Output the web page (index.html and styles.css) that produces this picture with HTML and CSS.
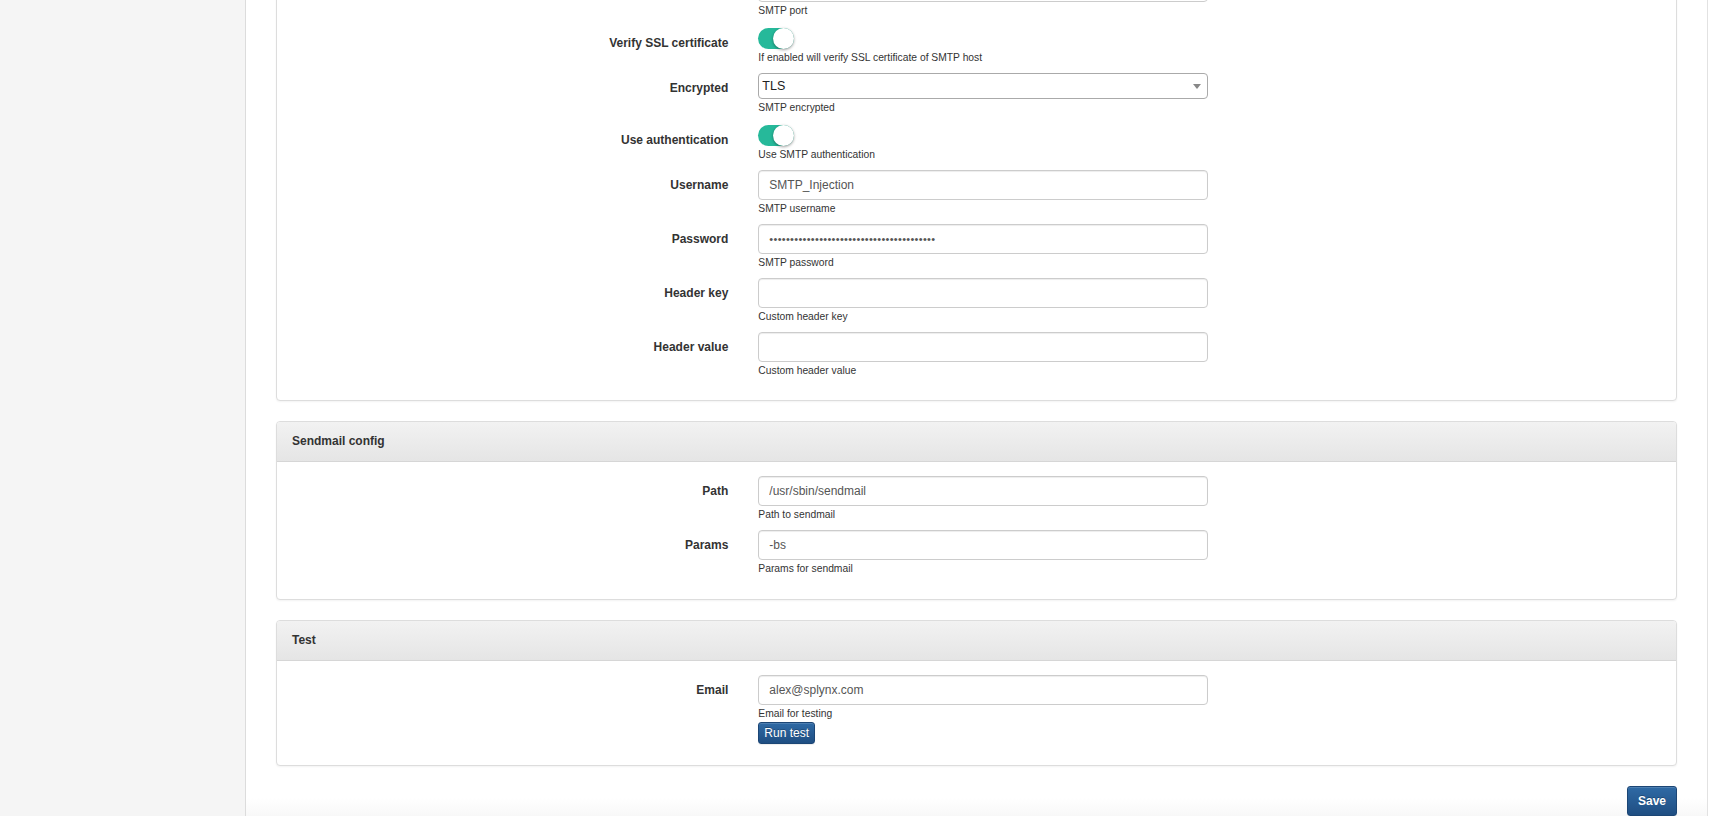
FILE: index.html
```html
<!DOCTYPE html>
<html lang="en">
<head>
<meta charset="utf-8">
<title>Email config</title>
<link rel="stylesheet" href="styles.css">
</head>
<body>
<div class="layout">
  <aside class="sidebar"></aside>
  <main class="content">
    <form class="form-horizontal">
      <section class="panel panel-scrolled">
        <div class="panel-body">
          <div class="form-group">
            <span class="control-label"></span>
            <div class="field">
              <input class="form-control" id="port" type="text" value="" aria-label="Port">
              <div class="help-block">SMTP port</div>
            </div>
          </div>
          <div class="form-group form-group-switch">
            <label class="control-label">Verify SSL certificate</label>
            <div class="field">
              <div class="switch-wrap"><span class="switch is-on"><span class="knob"></span></span></div>
              <div class="help-block">If enabled will verify SSL certificate of SMTP host</div>
            </div>
          </div>
          <div class="form-group">
            <label class="control-label" for="enc">Encrypted</label>
            <div class="field">
              <div class="select-wrap">
                <select class="select" id="enc"><option>TLS</option><option>SSL</option><option>None</option></select>
              </div>
              <div class="help-block">SMTP encrypted</div>
            </div>
          </div>
          <div class="form-group form-group-switch">
            <label class="control-label">Use authentication</label>
            <div class="field">
              <div class="switch-wrap"><span class="switch is-on"><span class="knob"></span></span></div>
              <div class="help-block">Use SMTP authentication</div>
            </div>
          </div>
          <div class="form-group">
            <label class="control-label" for="user">Username</label>
            <div class="field">
              <input class="form-control" id="user" type="text" value="SMTP_Injection">
              <div class="help-block">SMTP username</div>
            </div>
          </div>
          <div class="form-group">
            <label class="control-label" for="pass">Password</label>
            <div class="field">
              <input class="form-control" id="pass" type="password" value="0123456789012345678901234567890123456789">
              <div class="help-block">SMTP password</div>
            </div>
          </div>
          <div class="form-group">
            <label class="control-label" for="hkey">Header key</label>
            <div class="field">
              <input class="form-control" id="hkey" type="text" value="">
              <div class="help-block">Custom header key</div>
            </div>
          </div>
          <div class="form-group form-group-end">
            <label class="control-label" for="hval">Header value</label>
            <div class="field">
              <input class="form-control" id="hval" type="text" value="">
              <div class="help-block">Custom header value</div>
            </div>
          </div>
        </div>
      </section>

      <section class="panel">
        <div class="panel-heading">Sendmail config</div>
        <div class="panel-body">
          <div class="form-group">
            <label class="control-label" for="path">Path</label>
            <div class="field">
              <input class="form-control" id="path" type="text" value="/usr/sbin/sendmail">
              <div class="help-block">Path to sendmail</div>
            </div>
          </div>
          <div class="form-group">
            <label class="control-label" for="params">Params</label>
            <div class="field">
              <input class="form-control" id="params" type="text" value="-bs">
              <div class="help-block">Params for sendmail</div>
            </div>
          </div>
        </div>
      </section>

      <section class="panel">
        <div class="panel-heading">Test</div>
        <div class="panel-body">
          <div class="form-group form-group-last">
            <label class="control-label" for="email">Email</label>
            <div class="field">
              <input class="form-control" id="email" type="text" value="alex@splynx.com">
              <div class="help-block">Email for testing</div>
              <button type="button" class="btn btn-primary btn-xs">Run test</button>
            </div>
          </div>
        </div>
      </section>

      <div class="form-actions">
        <button type="submit" class="btn btn-primary btn-sm btn-save">Save</button>
      </div>
    </form>
  </main>
</div>
</body>
</html>
```

FILE: styles.css
```css
* { box-sizing: border-box; }

html, body {
  margin: 0;
  padding: 0;
  height: 100%;
  overflow: hidden;
}

body {
  font-family: "Liberation Sans", Arial, Helvetica, sans-serif;
  font-size: 12px;
  line-height: 1.42857;
  color: #333;
  background: #fff;
}

.layout {
  display: flex;
  min-height: 100vh;
  margin-right: 2px;
}

.sidebar {
  flex: 0 0 246px;
  background: #f5f5f5;
  border-right: 1px solid #dcdcdc;
}

.content {
  flex: 1 1 auto;
  padding: 0 30px;
  border-right: 1px solid #e2e2e2;
  background: linear-gradient(to bottom, #fff 0, #fff calc(100% - 18px), #f8f8f8 100%);
}

.panel-scrolled {
  margin-top: -44px;
}

.panel {
  background: #fff;
  border: 1px solid #ddd;
  border-radius: 4px;
  box-shadow: 0 1px 2px rgba(0, 0, 0, .05);
  margin-bottom: 20px;
}

.panel-heading {
  padding: 11px 15px;
  line-height: 17px;
  font-weight: bold;
  color: #333;
  background: linear-gradient(to bottom, #f2f2f2 0, #e5e5e5 100%);
  border-bottom: 1px solid #d6d6d6;
  border-radius: 3px 3px 0 0;
}

.panel-body {
  padding: 14px 15px 15px;
}

.panel-scrolled .panel-body {
  padding-top: 15px;
}

.form-group {
  display: grid;
  grid-template-columns: 33.333% 480px;
  margin: 0 -15px 9px;
}

.form-group-end {
  margin-bottom: 8px;
}

.form-group-last {
  margin-bottom: 6px;
}

.control-label {
  padding: 7px 15px 0;
  text-align: right;
  font-weight: bold;
  line-height: 17px;
  color: #333;
}

.form-group-switch .control-label {
  padding-top: 9px;
}

.field {
  padding: 0 15px;
}

.form-control {
  display: block;
  width: 100%;
  height: 30px;
  padding: 5px 10px;
  font-family: inherit;
  font-size: 12px;
  line-height: 18px;
  color: #555;
  background: #fff;
  border: 1px solid #ccc;
  border-radius: 4px;
  box-shadow: inset 0 1px 1px rgba(0, 0, 0, .075);
  outline: none;
}

input[type="password"].form-control {
  font-size: 11px;
  letter-spacing: 0.3px;
}

.help-block {
  margin-top: 2px;
  font-size: 10.3px;
  line-height: 13px;
  color: #333;
}

.switch-wrap {
  height: 23px;
  padding-top: 2px;
}

.switch {
  display: flex;
  justify-content: flex-end;
  width: 36px;
  height: 21px;
  border-radius: 11px;
  background: #dfdfdf;
}

.switch.is-on {
  background: #26b99a;
}

.knob {
  width: 21px;
  height: 21px;
  border-radius: 50%;
  background: #fff;
  box-shadow: 0 1px 3px rgba(0, 0, 0, .4);
}

.select-wrap {
  position: relative;
}

.select {
  display: block;
  width: 100%;
  height: 26px;
  padding: 0 24px 0 3px;
  font-family: inherit;
  font-size: 12.5px;
  color: #222;
  background: #fff;
  border: 1px solid #aaa;
  border-radius: 4px;
  -webkit-appearance: none;
  appearance: none;
  outline: none;
}

.select-wrap::after {
  content: "";
  position: absolute;
  right: 7px;
  top: 11px;
  border-left: 4px solid transparent;
  border-right: 4px solid transparent;
  border-top: 5px solid #888;
  pointer-events: none;
}

.btn {
  display: inline-block;
  font-family: inherit;
  font-size: 12px;
  line-height: 18px;
  border: 1px solid transparent;
  border-radius: 3px;
  cursor: pointer;
  text-shadow: 0 -1px 0 rgba(0, 0, 0, .25);
}

.btn-primary {
  color: #fff;
  background: linear-gradient(to bottom, #2f6aa5 0, #1f4e82 100%);
  border-color: #1c4675;
  box-shadow: inset 0 1px 0 rgba(255, 255, 255, .15), 0 1px 1px rgba(0, 0, 0, .075);
}

.btn-xs {
  margin-top: 2px;
  padding: 1px 5px;
  height: 22px;
}

.btn-sm {
  padding: 5px 10px;
  height: 30px;
}

.btn-save {
  font-weight: bold;
}

.form-actions {
  display: flex;
  justify-content: flex-end;
}
```
